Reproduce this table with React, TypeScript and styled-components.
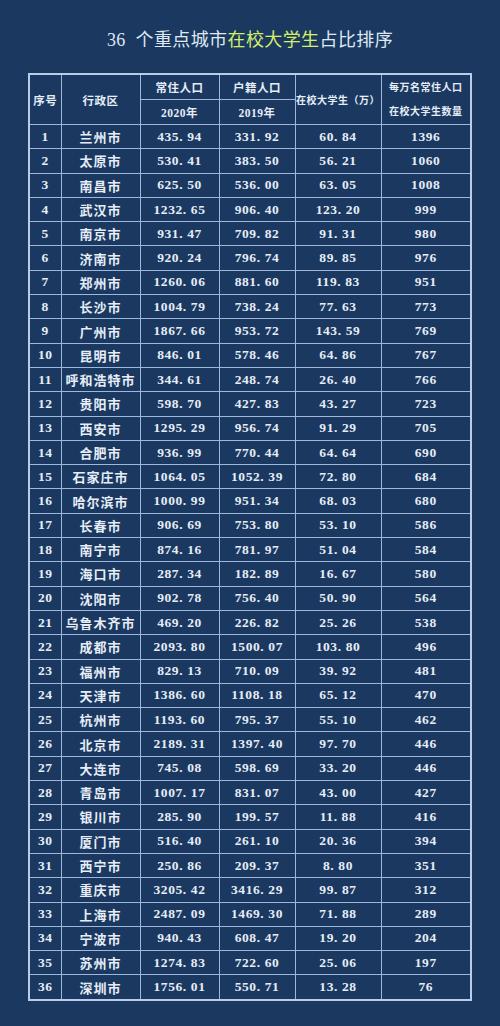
import styled, { createGlobalStyle } from 'styled-components';

type Row = [string, string, string, string, string];

// 城市, 常住人口, 户籍人口, 在校大学生, 每万名数量
const rows: Row[] = [
  ['兰州市', '435.94', '331.92', '60.84', '1396'],
  ['太原市', '530.41', '383.50', '56.21', '1060'],
  ['南昌市', '625.50', '536.00', '63.05', '1008'],
  ['武汉市', '1232.65', '906.40', '123.20', '999'],
  ['南京市', '931.47', '709.82', '91.31', '980'],
  ['济南市', '920.24', '796.74', '89.85', '976'],
  ['郑州市', '1260.06', '881.60', '119.83', '951'],
  ['长沙市', '1004.79', '738.24', '77.63', '773'],
  ['广州市', '1867.66', '953.72', '143.59', '769'],
  ['昆明市', '846.01', '578.46', '64.86', '767'],
  ['呼和浩特市', '344.61', '248.74', '26.40', '766'],
  ['贵阳市', '598.70', '427.83', '43.27', '723'],
  ['西安市', '1295.29', '956.74', '91.29', '705'],
  ['合肥市', '936.99', '770.44', '64.64', '690'],
  ['石家庄市', '1064.05', '1052.39', '72.80', '684'],
  ['哈尔滨市', '1000.99', '951.34', '68.03', '680'],
  ['长春市', '906.69', '753.80', '53.10', '586'],
  ['南宁市', '874.16', '781.97', '51.04', '584'],
  ['海口市', '287.34', '182.89', '16.67', '580'],
  ['沈阳市', '902.78', '756.40', '50.90', '564'],
  ['乌鲁木齐市', '469.20', '226.82', '25.26', '538'],
  ['成都市', '2093.80', '1500.07', '103.80', '496'],
  ['福州市', '829.13', '710.09', '39.92', '481'],
  ['天津市', '1386.60', '1108.18', '65.12', '470'],
  ['杭州市', '1193.60', '795.37', '55.10', '462'],
  ['北京市', '2189.31', '1397.40', '97.70', '446'],
  ['大连市', '745.08', '598.69', '33.20', '446'],
  ['青岛市', '1007.17', '831.07', '43.00', '427'],
  ['银川市', '285.90', '199.57', '11.88', '416'],
  ['厦门市', '516.40', '261.10', '20.36', '394'],
  ['西宁市', '250.86', '209.37', '8.80', '351'],
  ['重庆市', '3205.42', '3416.29', '99.87', '312'],
  ['上海市', '2487.09', '1469.30', '71.88', '289'],
  ['宁波市', '940.43', '608.47', '19.20', '204'],
  ['苏州市', '1274.83', '722.60', '25.06', '197'],
  ['深圳市', '1756.01', '550.71', '13.28', '76'],
];

const GlobalStyle = createGlobalStyle`
  html, body {
    margin: 0;
    padding: 0;
    background: #1b3960;
  }
`;

const Page = styled.div`
  width: 500px;
  height: 1026px;
  box-sizing: border-box;
  padding-top: 27px;
  background: #1b3960;
  color: #e6edf7;
  font-family: 'Liberation Serif', 'Noto Sans CJK SC', serif;
  overflow: hidden;
`;

const Title = styled.h1`
  margin: 0 0 20px;
  text-align: center;
  font-size: 18px;
  font-weight: 400;
  line-height: 26px;
  color: #dfe8f4;
  letter-spacing: 0.4px;
  em {
    font-style: normal;
    color: #d6ef6a;
  }
`;

const Table = styled.table`
  margin: 0 auto;
  width: 442px;
  border-collapse: collapse;
  border: 2px solid #b9cdea;
  table-layout: fixed;
`;

const Cell = styled.td`
  border: 1px solid #9fb7da;
  padding: 0;
  height: 23.3px;
  text-align: center;
  vertical-align: middle;
  font-size: 13.5px;
  font-weight: 700;
  white-space: nowrap;
  letter-spacing: 0.6px;
  color: #e6edf7;
`;

const Head = styled(Cell).attrs({ as: 'th' })<{ $tiny?: boolean }>`
  height: 24px;
  font-size: ${(p) => (p.$tiny ? '10px' : '11.5px')};
  font-weight: 700;
  letter-spacing: 0.5px;
`;

const TinyLine = styled.div`
  line-height: 24px;
`;

const City = styled(Cell)`
  font-size: 13px;
  letter-spacing: 1px;
`;

// 数字里的小数点原图较宽
const fmt = (v: string) => v.replace('.', '. ');

export default function App() {
  return (
    <>
      <GlobalStyle />
      <Page>
        <Title>
          36&nbsp; 个重点城市<em>在校大学生</em>占比排序
        </Title>
        <Table>
          <colgroup>
            <col style={{ width: 32 }} />
            <col style={{ width: 79 }} />
            <col style={{ width: 79 }} />
            <col style={{ width: 76 }} />
            <col style={{ width: 86 }} />
            <col style={{ width: 90 }} />
          </colgroup>
          <thead>
            <tr>
              <Head rowSpan={2}>序号</Head>
              <Head rowSpan={2}>行政区</Head>
              <Head>常住人口</Head>
              <Head>户籍人口</Head>
              <Head rowSpan={2} $tiny>
                在校大学生（万）
              </Head>
              <Head rowSpan={2} $tiny>
                <TinyLine>每万名常住人口</TinyLine>
                <TinyLine>在校大学生数量</TinyLine>
              </Head>
            </tr>
            <tr>
              <Head>2020年</Head>
              <Head>2019年</Head>
            </tr>
          </thead>
          <tbody>
            {rows.map((r, i) => (
              <tr key={r[0]}>
                <Cell>{i + 1}</Cell>
                <City>{r[0]}</City>
                <Cell>{fmt(r[1])}</Cell>
                <Cell>{fmt(r[2])}</Cell>
                <Cell>{fmt(r[3])}</Cell>
                <Cell>{r[4]}</Cell>
              </tr>
            ))}
          </tbody>
        </Table>
      </Page>
    </>
  );
}
